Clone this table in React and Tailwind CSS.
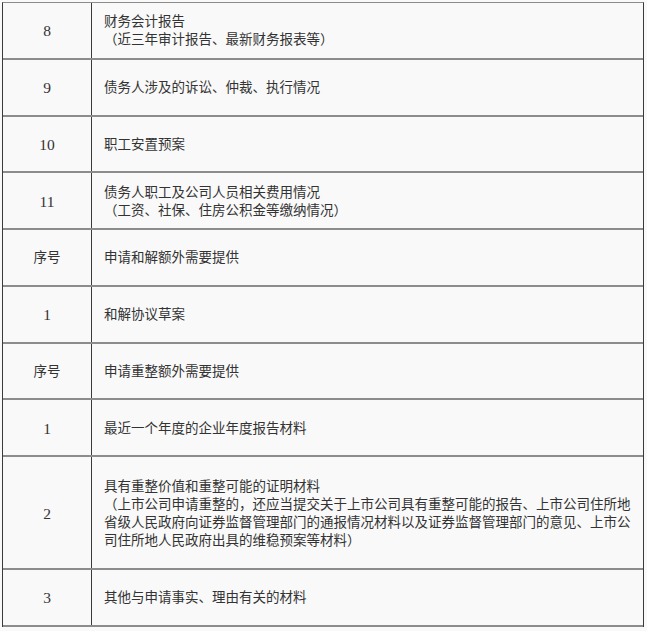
import React from 'react';

const rows = [
  { no: '8', lines: ['财务会计报告', '（近三年审计报告、最新财务报表等）'] },
  { no: '9', lines: ['债务人涉及的诉讼、仲裁、执行情况'] },
  { no: '10', lines: ['职工安置预案'] },
  { no: '11', lines: ['债务人职工及公司人员相关费用情况', '（工资、社保、住房公积金等缴纳情况）'] },
  { no: '序号', lines: ['申请和解额外需要提供'] },
  { no: '1', lines: ['和解协议草案'] },
  { no: '序号', lines: ['申请重整额外需要提供'] },
  { no: '1', lines: ['最近一个年度的企业年度报告材料'] },
  {
    no: '2',
    tall: true,
    lines: [
      '具有重整价值和重整可能的证明材料',
      '（上市公司申请重整的，还应当提交关于上市公司具有重整可能的报告、上市公司住所地',
      '省级人民政府向证券监督管理部门的通报情况材料以及证券监督管理部门的意见、上市公',
      '司住所地人民政府出具的维稳预案等材料）',
    ],
  },
  { no: '3', lines: ['其他与申请事实、理由有关的材料'] },
];

export default function App() {
  return (
    <div
      className="min-h-[631px] w-full bg-[#f9f9f9] pl-[2px] pt-[2px] text-[13.5px] leading-[18px] text-[#333]"
      style={{ fontFamily: '"Liberation Serif", "Noto Sans CJK SC", serif' }}
    >
      <div className="w-[642px] border-x border-t border-x-[#3a3a3a] border-t-[#8c8c8c]">
        {rows.map((r, i) => (
          <div
            key={i}
            className={`flex border-b-2 border-[#8c8c8c] ${r.tall ? 'h-[113px]' : 'h-[56.75px]'}`}
          >
            <div
              className={`flex w-[89px] shrink-0 items-center justify-center border-r border-[#3a3a3a] pt-[2px] ${
                /^\d+$/.test(r.no) ? 'text-[15.5px]' : ''
              }`}
            >
              {r.no}
            </div>
            <div className="flex flex-1 flex-col justify-center whitespace-nowrap pl-3 pt-[2px]">
              {r.lines.map((l, j) => (
                <div key={j}>{l}</div>
              ))}
            </div>
          </div>
        ))}
      </div>
    </div>
  );
}
